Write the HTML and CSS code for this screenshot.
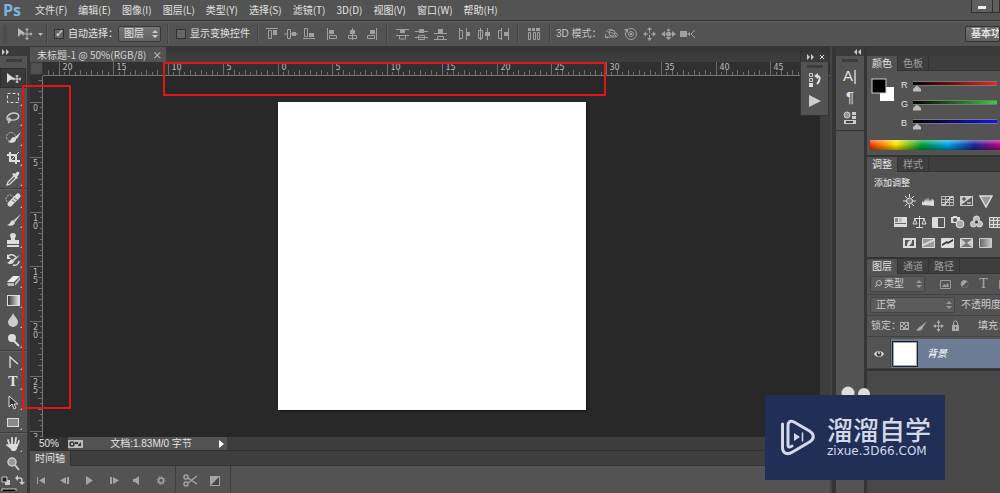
FILE: index.html
```html
<!DOCTYPE html>
<html lang="zh-CN">
<head>
<meta charset="utf-8">
<title>未标题-1</title>
<link rel="stylesheet" href="styles.css">
</head>
<body>
<header class="menubar">
  <span class="logo">Ps</span>
  <nav class="menus">
    <button>文件(F)</button><button>编辑(E)</button><button>图像(I)</button><button>图层(L)</button><button>类型(Y)</button><button>选择(S)</button><button>滤镜(T)</button><button>3D(D)</button><button>视图(V)</button><button>窗口(W)</button><button>帮助(H)</button>
  </nav>
  <div class="winctl">
    <button aria-label="最小化"><svg width="20" height="12"><path d="M6 6h8v3H6z" fill="#eee"/></svg></button>
    <button aria-label="还原"><svg width="20" height="12"><path d="M6 5h8v5H6z" fill="#eee"/></svg></button>
  </div>
</header>

<section class="options">
  <svg class="grip" width="4" height="18"><path d="M1 0v18M3 0v18" stroke="#464646"/></svg>
  <button class="current" aria-label="移动工具"><svg width="28" height="14" fill="#b9b9b9" stroke="#b9b9b9"><path d="M2 1v9l3-3 4-1z" stroke="none"/><path d="M11 3v8M7 7h8" fill="none"/><path d="M11 1l2 2h-4zM11 13l2-2h-4zM5.500 7l2-2v4zM16.500 7l-2-2v4z" stroke="none"/><path d="M22 6h5l-2.500 3z" stroke="none"/></svg></button>
  <i class="sep"></i>
  <label class="check c1"><input type="checkbox" checked>自动选择：</label>
  <span class="pick"><select aria-label="自动选择对象"><option>图层</option></select><svg width="6" height="10"><path d="M0 4l3-3 3 3zM0 6l3 3 3-3z" fill="#ccc"/></svg></span>
  <i class="sep"></i>
  <label class="check c2"><input type="checkbox">显示变换控件</label>
  <i class="sep"></i>
  <div class="icons align">
    <svg viewBox="0 0 19 14"><path d="M4 1.500h12M6.500 3.500h3v8h-3z"/><path class="f" d="M11 3h4v5h-4z"/></svg>
    <svg viewBox="0 0 19 14"><path d="M3 7h3M10 7h7M6.500 2.500h3v9h-3z"/><path class="f" d="M11 5h4v4h-4z"/></svg>
    <svg viewBox="0 0 19 14"><path d="M3 11.500h12M4.500 1.500h3v8h-3z"/><path class="f" d="M9 6h5v4H9z"/></svg>
  </div>
  <div class="icons align">
    <svg viewBox="0 0 19 14"><path d="M3.500 1v12M5.500 8.500h7v3h-7z"/><path class="f" d="M5 3h5v4H5z"/></svg>
    <svg viewBox="0 0 19 14"><path d="M9.500 1v12M5.500 8.500h8v3h-8z"/><path class="f" d="M7 3h5v4H7z"/></svg>
    <svg viewBox="0 0 19 14"><path d="M14.500 1v12M5.500 8.500h7v3h-7z"/><path class="f" d="M8 3h5v4H8z"/></svg>
  </div>
  <i class="sep s4"></i>
  <div class="icons align">
    <svg viewBox="0 0 19 14"><path d="M3 2.500h13M3 8.500h13M6.500 9v3h6V9"/><path class="f" d="M7 3h5v3H7z"/></svg>
    <svg viewBox="0 0 19 14"><path d="M3 4.500h13M3 10.500h13M6.500 8.500h6v4h-6z"/><path class="f" d="M7 2h5v4H7z"/></svg>
    <svg viewBox="0 0 19 14"><path d="M3 6.500h13M3 12.500h13M6.500 12V9.500h6V12"/><path class="f" d="M7 2h5v4H7z"/></svg>
  </div>
  <div class="icons align">
    <svg viewBox="0 0 19 14"><path d="M4.500 1v12M11.500 1v12M4.500 3.500h3v8h-3"/><path class="f" d="M12 5h3v4h-3z"/></svg>
    <svg viewBox="0 0 19 14"><path d="M6.500 1v12M13.500 1v12M4.500 3.500h4v8h-4z"/><path class="f" d="M11 5h5v4h-5z"/></svg>
    <svg viewBox="0 0 19 14"><path d="M8.500 1v12M15.500 1v12M8.500 3.500h-3v8h3"/><path class="f" d="M11 5h4v4h-4z"/></svg>
  </div>
  <i class="sep s5"></i>
  <div class="icons distribute"><svg viewBox="0 0 19 14"><path d="M4.500 5.500h2v7h-2zM9.500 5.500h2v7h-2zM13.500 5.500h2v7h-2z"/><path class="f" d="M4 1h3v3H4zM8 1h3v3H8zM12 1h4v3h-4z"/></svg></div>
  <i class="sep"></i>
  <span class="mode">3D 模式：</span>
  <div class="icons">
    <svg viewBox="0 0 19 14"><path d="M4 5c3-4 6-3 7-1M3 10h9c5 0 4-4 1-4M6 5c3 0 8 2 8 5M4 7l-1 3 3 1"/><circle cx="10" cy="6" r="3"/></svg>
    <svg viewBox="0 0 19 14"><circle cx="10" cy="7" r="5.500"/><circle cx="10" cy="7" r="2.500"/><path class="f" d="M3 2h4v4zM9 6h2v2H9z"/></svg>
    <svg viewBox="0 0 19 14"><path d="M9.500 3v3M9.500 8v3M5 7h3M11 7h3"/><path class="f" d="M9.500 0l2.500 3H7zM9.500 14l2.500-3H7zM3 7l3-2.500v5zM16 7l-3-2.500v5z"/></svg>
    <svg viewBox="0 0 19 14"><circle class="f" cx="9.500" cy="7" r="2.500"/><path d="M5 7h9"/><path class="f" d="M9.500 1l2 3h-4zM9.500 13l3-3h-6zM2 7l4-3v6zM17 7l-4-3v6z"/></svg>
    <svg viewBox="0 0 19 14"><path class="f" d="M2 4h7v6H2zM9 7l3-2v4z"/><path d="M17 3l-4 4 4 4"/></svg>
  </div>
  <button class="workspace-btn">基本功能</button>
</section>

<main class="workspace">
  <aside class="tools">
    <div class="strip"><svg width="8" height="6" fill="#ccc"><path d="M0 0l3 3-3 3zM4 0l3 3-3 3z"/></svg></div>
    <i class="handle"></i>
    <div class="toollist">
      <button class="on" aria-label="移动"><svg viewBox="0 0 18 18"><path d="M3 4v10l3-3 5-1z" fill="#ddd"/><path d="M13 6v8M9 10h8M11.500 7h3M11.500 13h3M10 8.500v3M16 8.500v3" stroke="#ddd"/></svg></button>
      <button class="more" aria-label="选框"><svg viewBox="0 0 18 18"><rect x="3.500" y="4.500" width="11" height="9" fill="none" stroke="#ddd" stroke-dasharray="3 2"/></svg></button>
      <button class="more" aria-label="套索"><svg viewBox="0 0 18 18"><path d="M5 12c-5-3 0-8 5-8s6 4 3 6-7 1-8 0 1-2 1 1-1 2-2 3" fill="none" stroke="#ccc" stroke-width="1.400"/></svg></button>
      <button class="more" aria-label="快速选择"><svg viewBox="0 0 18 18"><circle cx="7" cy="8" r="4.500" fill="none" stroke="#bbb" stroke-dasharray="2 1"/><path d="M17 3l-6 5 2 2zM10 8c-3 0-3 4-6 5 4 2 9 0 8-4z" fill="#ddd"/></svg></button>
      <button class="more" aria-label="裁剪"><svg viewBox="0 0 18 18"><path d="M6 3v9h10M3 6h9v9" fill="none" stroke="#ddd" stroke-width="2"/><path d="M15 3L7 11" stroke="#ddd"/></svg></button>
      <button class="more" aria-label="吸管"><svg viewBox="0 0 18 18"><path d="M10 7L4 13l-1 3 3-1 6-6" fill="none" stroke="#ddd" stroke-width="1.300"/><path d="M8 5l2-1 1 1 2-2c2-1 3 1 2 2l-2 3 1 1-2 1z" fill="#ddd"/></svg></button>
      <i class="rule"></i>
      <button class="more" aria-label="修复画笔"><svg viewBox="0 0 18 18"><circle cx="6" cy="8" r="4" fill="none" stroke="#bbb" stroke-dasharray="2 1"/><path d="M6 13L14 5" stroke="#ddd" stroke-width="5" stroke-linecap="round"/><path d="M8 9l4 3M10 7l3 2" stroke="#666"/></svg></button>
      <button class="more" aria-label="画笔"><svg viewBox="0 0 18 18"><path d="M17 3l-7 6 1 2zM9 9c-3 1-2 4-6 5 4 2 8 0 8-3z" fill="#ddd"/></svg></button>
      <button class="more" aria-label="图章"><svg viewBox="0 0 18 18"><path d="M9 2c4 0 3 4 2 5v2h4v4H3V9h4V7C6 6 5 2 9 2zM3 14h12v2H3z" fill="#ddd"/></svg></button>
      <button class="more" aria-label="历史画笔"><svg viewBox="0 0 18 18"><path d="M4 5c3-2 6-1 8 1M15 10c0 3-3 5-6 4" fill="none" stroke="#ddd" stroke-width="1.500"/><path d="M3 3v5h4zM16 4l-7 4 1 2zM8 8c-3 1-2 3-5 4 3 2 7 1 7-2z" fill="#ddd"/></svg></button>
      <button class="more" aria-label="橡皮擦"><svg viewBox="0 0 18 18"><path d="M3 11l6-6h7l-6 6z" fill="#eee"/><path d="M3 12h7v3H4zM11 12l5-6v3l-5 6z" fill="#bbb"/></svg></button>
      <button class="more" aria-label="渐变"><svg viewBox="0 0 18 18"><defs><linearGradient id="g1"><stop stop-color="#333"/><stop offset="1" stop-color="#eee"/></linearGradient></defs><rect x="3.500" y="4.500" width="12" height="10" fill="url(#g1)" stroke="#ddd"/></svg></button>
      <button class="more" aria-label="模糊"><svg viewBox="0 0 18 18"><path d="M9 2c2 4 5 6 5 9a5 5 0 0 1-10 0c0-3 4-5 5-9z" fill="#ccc"/></svg></button>
      <button class="more" aria-label="减淡"><svg viewBox="0 0 18 18"><circle cx="8" cy="7" r="4" fill="#ddd"/><path d="M10 10l5 5" stroke="#ddd" stroke-width="2"/></svg></button>
      <i class="rule"></i>
      <button class="more" aria-label="钢笔"><svg viewBox="0 0 18 18"><path d="M6 15V4l8 7" fill="none" stroke="#ddd" stroke-width="1.300"/></svg></button>
      <button class="more serif" aria-label="文字">T</button>
      <button class="more" aria-label="路径选择"><svg viewBox="0 0 18 18"><path d="M5 3v11l3-3 2 5 2-1-2-4h4z" fill="#333" stroke="#ddd"/></svg></button>
      <button class="more" aria-label="矩形"><svg viewBox="0 0 18 18"><rect x="3.500" y="5.500" width="11" height="8" fill="#888" stroke="#ddd"/></svg></button>
      <i class="rule"></i>
      <button class="more" aria-label="抓手"><svg viewBox="0 0 18 18"><path d="M5 10l1 1M6 11L4 5M8 10V3M11 10l1-7M13 11l2-5M6 12l-3-2" stroke="#ddd" stroke-width="1.800" stroke-linecap="round"/><path d="M5 9h9l-1 5-2 2H8l-3-4z" fill="#ddd"/></svg></button>
      <button aria-label="缩放"><svg viewBox="0 0 18 18"><circle cx="8" cy="7" r="4" fill="#999" stroke="#ccc" stroke-width="1.500"/><path d="M11 10l4 5" stroke="#ccc" stroke-width="2"/></svg></button>
    </div>
    <svg class="swap" viewBox="0 0 28 17"><path d="M5 6h5v5H5z" fill="#ccc"/><path d="M2 3h5v5H2z" fill="#222" stroke="#ccc"/><path d="M17 4h3c2 0 2 1 2 5" fill="none" stroke="#ccc" stroke-width="1.500"/><path d="M18 1v6l-3-3zM19 8h6l-3 3z" fill="#ccc"/><rect x="2" y="15" width="14" height="6" fill="#000" stroke="#ccc"/></svg>
  </aside>

  <section class="doc">
    <div class="doctabs"><div class="doctab">未标题-1 @ 50%(RGB/8)<button aria-label="关闭">×</button></div></div>
    <div class="rulerrow"><i class="corner"></i><svg id="hruler" class="hruler"></svg></div>
    <div class="stage">
      <svg id="vruler" class="vruler"></svg>
      <div class="canvas"><div class="page"></div></div>
      <i class="vscroll"></i>
    </div>
    <div class="status">
      <span class="zoomval">50%</span>
      <div class="docinfo"><svg width="15" height="8"><rect width="15" height="8" fill="#bbb"/><circle cx="4" cy="4" r="2" fill="none" stroke="#333" stroke-width="1.500"/><path d="M7 2h3v2H7zM10 5l3-3v4h-3z" fill="#333"/></svg><span>文档:1.83M/0 字节</span><svg width="5" height="8"><path d="M0 0l5 4-5 4z" fill="#fff"/></svg></div>
    </div>
    <div class="timeline">
      <div class="tabs"><button class="tab on">时间轴</button></div>
      <div class="controls">
        <div class="play">
          <svg viewBox="0 0 24 14"><path d="M7 4h1v7H7zM15 4v7L9 7.500z"/></svg>
          <svg viewBox="0 0 24 14"><path d="M12 4v7L6 7.500zM13 4h2v7h-2z"/></svg>
          <svg viewBox="0 0 24 14"><path d="M8 3v9l7-4.500z"/></svg>
          <svg viewBox="0 0 24 14"><path d="M8 4h2v7H8zM11 4v7l6-3.500z"/></svg>
          <svg viewBox="0 0 24 14"><path d="M13 3v9L9 9H7V6h2z"/></svg>
          <svg viewBox="0 0 24 14"><circle cx="11" cy="7.500" r="2.500" fill="none" stroke="#a4a4a4" stroke-width="1.500"/><circle cx="11" cy="7.500" r="4" fill="none" stroke="#a4a4a4" stroke-dasharray="1.500 1.600"/></svg>
        </div>
        <div class="cut">
          <svg viewBox="0 0 24 14"><g fill="none" stroke="#a4a4a4" stroke-width="1.500"><circle cx="7" cy="4" r="2"/><circle cx="7" cy="11" r="2"/><path d="M9 5l9 6M9 10l9-7"/></g></svg>
          <svg viewBox="0 0 24 14"><path d="M7 3h10v10H7z"/><path d="M8 12l8-8v8z" fill="#444"/></svg>
        </div>
      </div>
    </div>
    <div class="floating">
      <div class="fhead"><svg width="8" height="6" fill="#ccc"><path d="M0 0l3 3-3 3zM4 0l3 3-3 3z"/></svg><svg width="6" height="6"><path d="M1 1l4 4M5 1L1 5" stroke="#ddd"/></svg></div>
      <i class="handle"></i>
      <svg width="16" height="18"><path d="M2.500 2.500h3v3h-3zM2.500 7.500h3v3h-3z" fill="none" stroke="#ccc"/><path d="M2 12h4v4H2zM7 5l4-3v6z" fill="#ddd"/><path d="M10 5c4 0 3 5 0 8" fill="none" stroke="#ddd" stroke-width="2"/></svg>
      <svg width="14" height="16"><path d="M1 3l12 6-12 6z" fill="#ccc"/></svg>
    </div>
  </section>

  <aside class="dock">
    <div class="strip"><svg width="8" height="6" fill="#ccc"><path d="M3 0L0 3l3 3zM7 0L4 3l3 3z"/></svg></div>
    <div class="dockbody">
      <i class="handle"></i>
      <button class="char" aria-label="字符">A|</button>
      <button class="char" aria-label="段落">¶</button>
      <button aria-label="3D"><svg width="14" height="14" fill="#ccc"><circle cx="4" cy="4" r="3" fill="#999" stroke="#ccc"/><path d="M9 1h4v3H9zM9 5h4v3H9zM1 9h12v4H1z"/><path d="M3 10h7v2H3z" fill="#444"/></svg></button>
    </div>
  </aside>

  <aside class="panels">
    <div class="strip"></div>
    <section class="panel color">
      <div class="tabs"><button class="tab on">颜色</button><button class="tab">色板</button></div>
      <div class="colorbody">
        <svg class="swatch" width="26" height="26"><rect x="9" y="9" width="14" height="14" fill="#fff"/><rect x="1" y="1" width="14" height="14" fill="#000" stroke="#ccc"/></svg>
        <div class="sliders">
          <label>R<input class="r" type="range" min="0" max="255" value="0"></label>
          <label>G<input class="g" type="range" min="0" max="255" value="0"></label>
          <label>B<input class="b" type="range" min="0" max="255" value="0"></label>
        </div>
      </div>
      <div class="spectrum"></div>
    </section>
    <section class="panel adjust">
      <div class="tabs"><button class="tab on">调整</button><button class="tab">样式</button></div>
      <h2>添加调整</h2>
      <div class="adj">
        <svg viewBox="0 0 19 14"><circle cx="9.500" cy="7" r="3" fill="#777" stroke="#ddd"/><path d="M9.500 0v3M9.500 11v3M3 7h3M13 7h3M5 2l2 2M14 2l-2 2M5 12l2-2M14 12l-2-2" stroke="#ddd"/></svg>
        <svg viewBox="0 0 19 14"><path d="M3 11V8l1-1 1 2V5l1 3 1-4 1 4 1-5 1 5 1-3 1 3 1-4 1 3 1-2v7z" fill="#ddd"/></svg>
        <svg viewBox="0 0 19 14"><path d="M3.500 2.500h12v9h-12zM7.500 2v9M11.500 2v9M3 5.500h12M3 8.500h12" fill="none" stroke="#bbb"/><path d="M4 11c6 0 5-8 11-8" fill="none" stroke="#fff"/></svg>
        <svg viewBox="0 0 19 14"><path d="M3 2h13v10H3z" fill="#ccc"/><path d="M4 11L15 3v8z" fill="#555"/><path d="M5 5h4M7 3v4" stroke="#333"/><path d="M10 9h4" stroke="#eee"/></svg>
        <svg viewBox="0 0 19 14"><path d="M4 2h12l-6 11z" fill="#999" stroke="#ddd" stroke-width="1.500"/></svg>
      </div>
      <div class="adj wide">
        <svg viewBox="0 0 19 14"><path d="M3 2h13v10H3z" fill="#ddd"/><path d="M4 3h3v4H4z" fill="#888"/><path d="M8 3h3v4H8z" fill="#bbb"/><path d="M4 8h11v1H4z" fill="#666"/></svg>
        <svg viewBox="0 0 19 14"><path d="M9.500 1v11M4 3.500h11M6 12.500h7M5 4L3 9h4zM14 4l-2 5h4z" fill="none" stroke="#ddd"/></svg>
        <svg viewBox="0 0 19 14"><path d="M3.500 2.500h12v10h-12z" fill="#555" stroke="#ddd"/><path d="M4 3h5v9H4z" fill="#ddd"/></svg>
        <svg viewBox="0 0 19 14"><path d="M3 2h2V1h4v1h3v6H3z" fill="#ddd"/><circle cx="7" cy="5" r="2" fill="#555"/><circle cx="12" cy="9" r="4" fill="#aaa" stroke="#ddd"/></svg>
        <svg viewBox="0 0 19 14"><g fill="#bbb" stroke="#ddd"><circle cx="9.500" cy="4" r="3"/><circle cx="6.500" cy="9" r="3"/><circle cx="12.500" cy="9" r="3"/></g><circle cx="9.500" cy="7" r="1.500" fill="#333"/></svg>
        <svg viewBox="0 0 19 14"><path d="M3.500 2.500h12v10h-12zM7.500 2v10M11.500 2v10M3 5.500h12M3 9.500h12" fill="#777" stroke="#ddd"/></svg>
      </div>
      <div class="adj">
        <svg viewBox="0 0 19 14"><path d="M4 3h11v8H4z" fill="#555" stroke="#ddd" stroke-width="2"/><path d="M7 10c0-4 2-6 5-6 0 4-2 6-5 6" fill="#ddd"/></svg>
        <svg viewBox="0 0 19 14"><path d="M3.500 2.500h12v9h-12z" fill="#999" stroke="#ddd"/><path d="M4 8l11-5v2L4 10z" fill="#ddd"/></svg>
        <svg viewBox="0 0 19 14"><path d="M3.500 2.500h12v9h-12z" fill="#ddd" stroke="#ddd"/><path d="M4 8l5-3 1 1 5-3v2l-5 3-1-1-5 3z" fill="#333"/></svg>
        <svg viewBox="0 0 19 14"><path d="M3.500 2.500h12v9h-12z" fill="#777" stroke="#ddd"/><path d="M4 3l5 4-5 4zM15 3l-5 4 5 4z" fill="#ccc"/></svg>
        <svg viewBox="0 0 19 14"><defs><linearGradient id="g2"><stop stop-color="#666"/><stop offset="1" stop-color="#ccc"/></linearGradient></defs><path d="M3.500 2.500h12v9h-12z" fill="url(#g2)" stroke="#ccc"/></svg>
      </div>
    </section>
    <section class="panel layers">
      <div class="tabs"><button class="tab on">图层</button><button class="tab">通道</button><button class="tab">路径</button></div>
      <div class="lrow">
        <span class="pick kind"><select aria-label="类型"><option>类型</option></select><svg class="lens" width="9" height="9"><circle cx="5" cy="4" r="2.500" fill="none" stroke="#bbb"/><path d="M3 6L1 8" stroke="#bbb"/></svg><svg width="6" height="10"><path d="M0 4l3-3 3 3zM0 6l3 3 3-3z" fill="#999"/></svg></span>
        <div class="lfilters">
          <svg viewBox="0 0 19 14"><path d="M4.500 3.500h10v8h-10z" fill="none" stroke="#999"/><path d="M6 10l2-3 2 1 2-2 1 4z" fill="#999"/></svg>
          <svg viewBox="0 0 19 14"><circle cx="9.500" cy="7" r="3.500" fill="#aaa" stroke="#999"/><path d="M7 9.500l5-5a3 3 0 0 1-5 5" fill="#555"/></svg>
          <span class="serif">T</span>
          <svg viewBox="0 0 19 14"><path d="M6.500 3.500h8v8h-8z" fill="none" stroke="#999"/></svg>
        </div>
      </div>
      <div class="lrow">
        <span class="pick blend"><select aria-label="混合模式"><option>正常</option></select><svg width="6" height="10"><path d="M0 4l3-3 3 3zM0 6l3 3 3-3z" fill="#999"/></svg></span>
        <span class="opacity">不透明度：</span>
      </div>
      <div class="lrow lock">
        <span>锁定：</span>
        <div class="locks">
          <svg viewBox="0 0 17 14"><path d="M4 3h9v8H4z" fill="#aaa"/><path d="M5 4h2v2H5zM9 4h2v2H9zM7 6h2v2H7zM5 8h2v2H5zM10 7h2v2h-2z" fill="#555"/></svg>
          <svg viewBox="0 0 17 14"><path d="M14 2L8 7l2 1zM8 7c-3 1-2 3-5 4 3 2 7 0 7-3z" fill="#aaa"/></svg>
          <svg viewBox="0 0 17 14"><path d="M8.500 3v8M4 7h9" stroke="#aaa"/><path d="M8.500 1l2 3h-4zM8.500 13l2-3h-4zM3 7l3-2v4zM14 7l-3-2v4z" fill="#aaa"/></svg>
          <svg viewBox="0 0 17 14"><path d="M5 6h7v6H5z" fill="#aaa"/><path d="M6.500 6V4a2 2 0 0 1 4 0v2" fill="none" stroke="#aaa"/><path d="M8 8h1v2H8z" fill="#444"/></svg>
        </div>
        <span class="fill">填充：</span>
      </div>
      <div class="layer">
        <button class="eye" aria-label="可见"><svg width="12" height="10"><path d="M1 5c2-4 8-4 10 0-2 4-8 4-10 0z" fill="#ddd"/><circle cx="6" cy="5" r="2.500" fill="#444"/><circle cx="6" cy="4" r="1" fill="#ddd"/></svg></button>
        <div class="layerinfo"><i class="thumb"></i><em>背景</em></div>
      </div>
    </section>
  </aside>
</main>

<div class="mark mark-h"></div>
<div class="mark mark-v"></div>
<svg class="ears" width="32" height="12"><circle cx="8" cy="8" r="6.500" fill="#ddd"/><circle cx="24" cy="9" r="6" fill="#ddd"/></svg>
<div class="brand">
  <svg width="36" height="38" fill="none" stroke="#d3d9e8" stroke-width="3" stroke-linecap="round" stroke-linejoin="round"><path d="M2.500 5v23c0 7 5 8 10 5l17-10c5-3 5-8 0-11L14 3c-4-2-6 0-6 4v19c0 3 3 2 4 1"/><path d="M14 14v8l6-4z" fill="#d3d9e8" stroke="none"/><path d="M22.500 14v8" stroke-width="1.500"/></svg>
  <div class="brandtext"><strong>溜溜自学</strong><span>zixue.3D66.COM</span></div>
</div>
<script src="script.js"></script>
</body>
</html>
```
FILE: styles.css
```css
* { box-sizing: border-box; }
body {
  margin: 0; height: 100vh; overflow: hidden; position: relative;
  display: flex; flex-direction: column;
  background: #2a2a2a; color: #e2e2e2;
  font: 10px/14px "Liberation Sans", "Noto Sans CJK SC", sans-serif;
}
button, select, input { font: inherit; color: inherit; margin: 0; }
button { background: none; border: 0; padding: 0; white-space: nowrap; }
svg { display: block; flex: none; }
i { display: block; flex: none; }

.menubar { display: flex; align-items: center; height: 21px; flex: none; background: #535353; border-bottom: 1px solid #303030; }
.logo { width: 35px; padding-left: 3px; font: bold 16px/18px "Open Sans", sans-serif; color: #80b3df; }
.menus { display: flex; gap: 11px; flex: 1; font-family: "Noto Sans CJK SC", sans-serif; }
.winctl { display: flex; align-self: flex-start; width: 29px; height: 13px; overflow: hidden; border: 1px solid #303030; border-top: 0; background: #5f5f5f; }
.winctl button + button { border-left: 1px solid #303030; }

.options { display: flex; align-items: center; height: 26px; flex: none; background: #535353; border-top: 1px solid #5e5e5e; border-bottom: 1px solid #383838; overflow: hidden; white-space: nowrap; }
.grip { margin: 0 9px 0 3px; }
.current { width: 30px; }
.sep { width: 2px; height: 20px; background: #454545; border-right: 1px solid #5c5c5c; }
.check { display: flex; align-items: center; gap: 4px; }
.c1 { padding-left: 6px; width: 70px; }
.c2 { padding-left: 7px; width: 88px; }
.check input { appearance: none; width: 10px; height: 10px; border: 1px solid #333; background: #666; display: grid; place-items: center; }
.check input:checked::after { content: "✓"; font: bold 11px/8px "DejaVu Sans", sans-serif; color: #eee; }
.pick { position: relative; display: block; flex: none; width: 43px; height: 16px; margin-right: 6px; }
.pick select { appearance: none; width: 100%; height: 100%; padding: 0 5px; border: 1px solid #383838; border-radius: 2px; background: linear-gradient(#747474, #626262); }
.pick svg { position: absolute; right: 3px; top: 3px; }
.s4 { margin-right: 5px; }
.s5 { margin-right: 5px; }
.align { margin-right: 5px; }
.sep + .align { margin-left: 3px; }
.s4 + .align { margin-left: 0; }
.icons { display: flex; }
.distribute { margin-right: 6px; }
.icons svg { width: 19px; height: 14px; fill: none; stroke: #a0a0a0; }
.icons .f { fill: #a0a0a0; stroke: none; }
.mode { width: 51px; padding-left: 5px; color: #c4c4c4; }
.workspace-btn { margin-left: auto; width: 35px; height: 16px; padding-left: 5px; overflow: hidden; text-align: left; border: 1px solid #333; border-radius: 2px; background: linear-gradient(#707070, #606060); font-weight: bold; }

.workspace { display: flex; flex: 1; min-height: 0; }
.strip { height: 9px; flex: none; background: #3a3a3a; padding: 2px; }
.handle { width: 16px; height: 3px; background: #3d3d3d; margin: 3px auto; }
.tools { width: 30px; flex: none; display: flex; flex-direction: column; background: #535353; border-right: 3px solid #383838; }
.toollist { display: flex; flex-direction: column; margin-top: 3px; }
.toollist button { position: relative; height: 20px; width: 26px; flex: none; display: grid; place-items: center; }
.toollist .on { background: #3a3a3a; border: 1px solid #2e2e2e; }
.toollist svg { width: 18px; height: 18px; }
.toollist .more::after { content: ""; position: absolute; right: 4px; bottom: 2px; border: 1px solid #bbb; border-left-color: transparent; border-top-color: transparent; }
.serif { font: bold 14px/16px "Liberation Serif", serif; }
.rule { height: 2px; background: #3c3c3c; border-bottom: 1px solid #606060; }
.swap { width: 28px; height: 17px; }

.doc { position: relative; flex: 1; min-width: 0; display: flex; flex-direction: column; border-right: 2px solid #444; background: #2a2a2a; }
.doctabs { height: 15px; flex: none; display: flex; background: linear-gradient(#343434, #3f3f3f); }
.doctab { display: flex; gap: 6px; padding: 0 4px 0 7px; background: #535353; color: #d6d6d6; line-height: 16px; font-family: "Noto Sans CJK SC", sans-serif; }
.doctab button { line-height: 14px; }
.rulerrow { display: flex; height: 14px; flex: none; background: #303030; }
.corner { width: 13px; height: 13px; background: #505050; border: 1px solid #3a3a3a; }
.hruler { flex: 1; min-width: 0; height: 14px; border-bottom: 1px solid #777; }
.stage { display: flex; flex: 1; min-height: 0; }
.vruler { width: 13px; height: 100%; background: #303030; border-right: 1px solid #777; }
.hruler, .vruler { stroke: #6c6c6c; fill: #bbb; overflow: hidden; font: 8px "DejaVu Sans", sans-serif; }
.hruler text, .vruler text { stroke: none; }
.canvas { flex: 1; display: grid; place-items: center; padding-bottom: 1px; background: #282828; }
.page { width: 308px; aspect-ratio: 1; background: #fff; box-shadow: 1px 1px 2px #111; }
.vscroll { width: 10px; background: #3e3e3e; }
.status { display: flex; height: 14px; flex: none; background: #3d3d3d; border-bottom: 1px solid #303030; }
.zoomval { width: 38px; padding-left: 9px; background: #333; }
.docinfo { display: flex; align-items: center; width: 159px; background: #535353; padding: 0 3px 0 0; }
.docinfo span { flex: 1; text-align: center; }
.timeline { flex: none; background: #535353; }
.tabs { display: flex; height: 15px; background: #3e3e3e; border-bottom: 1px solid #333; }
.tab { padding: 0 5px; line-height: 15px; color: #a0a0a0; border-right: 1px solid #333; }
.tab.on { background: #535353; color: #e2e2e2; height: 15px; }
.controls { display: flex; height: 27px; }
.play, .cut { display: flex; align-items: center; border-right: 1px solid #3d3d3d; }
.play { width: 146px; }
.cut { padding: 0 3px; }
.controls svg { width: 24px; height: 14px; fill: #a4a4a4; }

.floating { position: absolute; right: 1px; top: 4px; width: 29px; height: 65px; display: flex; flex-direction: column; align-items: center; background: #535353; border: 1px solid #333; gap: 3px; }
.floating .handle { margin: 0; }
.fhead { align-self: stretch; display: flex; align-items: center; justify-content: space-between; height: 10px; flex: none; padding: 0 3px 0 6px; background: #3a3a3a; }

.dock { width: 35px; flex: none; display: flex; flex-direction: column; border: solid #353535; border-width: 0 3px 0 4px; background: #535353; }
.dock .strip { padding-left: 18px; }
.dockbody { display: flex; flex-direction: column; align-items: center; height: 75px; border-bottom: 1px solid #353535; }
.dockbody button { height: 21px; flex: none; display: grid; place-items: center; }
.dockbody .char { font: 15px/20px "Liberation Sans", sans-serif; }

.panels { width: 133px; flex: none; overflow: hidden; display: flex; flex-direction: column; background: #484848; white-space: nowrap; }
.panel { flex: none; background: #535353; border-bottom: 2px solid #333; }
.colorbody { display: flex; height: 69px; padding-top: 7px; }
.swatch { margin: 0 4px; }
.sliders { flex: 1; min-width: 0; }
.sliders label { display: grid; grid-template-columns: 12px 1fr; height: 19px; line-height: 14px; font-size: 9px; }
.sliders input { appearance: none; width: 100%; min-width: 0; padding-right: 3px; height: 14px; background: none; }
.sliders input::-webkit-slider-runnable-track { height: 5px; margin-bottom: 4px; border: 1px solid #777; border-width: 1px 0; background: linear-gradient(90deg, #000, var(--end)); }
.sliders input::-webkit-slider-thumb { appearance: none; width: 8px; height: 6px; margin-top: 4px; background: #bbb; clip-path: polygon(50% 0, 100% 60%, 100% 100%, 0 100%, 0 60%); }
.r { --end: #f02424; } .g { --end: #38d038; } .b { --end: #1212f0; }
.spectrum { height: 10px; margin: 0 0 5px 3px; background: linear-gradient(#fff6, transparent 45%, #0006), linear-gradient(90deg, #f33700, #ffe500 20%, #00a336 40%, #00a6e8 60%, #1d2a9a 80%, #c3008c); }
.adjust { padding-bottom: 4px; }
.adjust h2 { margin: 4px 0 0 7px; font-size: 9px; line-height: 14px; font-weight: normal; color: #eee; }
.adj { display: flex; padding-left: 33px; height: 21px; align-items: center; }
.adj.wide { padding-left: 24px; }
.adj svg { width: 19px; height: 14px; }
.lrow { display: flex; align-items: center; height: 21px; padding-left: 3px; border-bottom: 1px solid #424242; color: #ccc; }
.pick.kind { width: 55px; }
.kind select { padding-left: 13px; }
.pick .lens { left: 4px; right: auto; }
.pick.blend { width: 85px; }
.lrow .pick select { background: #5b5b5b; border-color: #444; }
.lfilters { display: flex; margin-left: 5px; }
.lfilters svg { width: 19px; height: 14px; }
.lfilters .serif { width: 19px; font-weight: normal; text-align: center; line-height: 14px; color: #aaa; }
.lock { padding-left: 4px; }
.lock span { width: 25px; }
.locks { display: flex; }
.locks svg { width: 17px; height: 14px; }
.lock .fill { margin-left: 14px; }
.layer { display: flex; height: 32px; padding-top: 2px; border-bottom: 1px solid #3d3d3d; }
.eye { width: 24px; display: grid; place-items: center; border-right: 1px solid #444; }
.layerinfo { flex: 1; display: flex; align-items: center; gap: 9px; padding-left: 1px; background: #6b7c94; color: #fff; }
.thumb { width: 26px; height: 26px; border: 1px solid #222; outline: 1px solid #9aa6b6; outline-offset: -2px; background: #fff; }

.mark { position: absolute; border: 2px solid #df1717; }
.mark-h { left: 163px; top: 62px; width: 443px; height: 34px; }
.mark-v { left: 22px; top: 85px; width: 49px; height: 324px; }
.ears { position: absolute; left: 840px; top: 385px; }
.brand { position: absolute; left: 765px; top: 395px; width: 180px; height: 85px; display: flex; align-items: center; gap: 11px; padding-left: 15px; background: #212f56; color: #d3d9e8; }
.brandtext { display: flex; flex-direction: column; padding-bottom: 5px; }
.brandtext strong { font: 500 26px/32px "Noto Sans CJK SC", sans-serif; }
.brandtext span { font: 12px/12px "DejaVu Sans", sans-serif; }
```
FILE: script.js
```js
// Ruler marks: one labelled line every five units, a short mark every half unit.
const NS = "http://www.w3.org/2000/svg";
const FIVE = 54.75;

function add(parent, name, attrs, text) {
  const node = document.createElementNS(NS, name);
  for (const key in attrs) node.setAttribute(key, attrs[key]);
  if (text !== undefined) node.textContent = text;
  parent.appendChild(node);
}

function ruler(svg, origin, length, vertical) {
  const step = FIVE / 10;
  for (let i = -Math.floor(origin / step); origin + i * step < length; i++) {
    const pos = Math.round(origin + i * step) + 0.5;
    const major = i % 10 === 0;
    const start = major ? 0 : i % 2 === 0 ? 8 : 10;
    add(svg, "path", { d: vertical ? `M${start} ${pos}H13` : `M${pos} ${start}V14` });
    if (!major) continue;
    const label = String(Math.abs(i / 2));
    if (vertical) {
      // Digits are stacked; one that would fall below the ruler is left out.
      [...label].forEach((c, n) => {
        if (pos + n * 8 < length) add(svg, "text", { x: 3, y: pos + 8 + n * 8 }, c);
      });
    } else if (pos + 14 < length) {
      add(svg, "text", { x: pos + 3, y: 8 }, label);
    }
  }
}

const page = document.querySelector(".page").getBoundingClientRect();
const h = document.getElementById("hruler");
const v = document.getElementById("vruler");
const hb = h.getBoundingClientRect();
const vb = v.getBoundingClientRect();
ruler(h, page.left - hb.left, hb.width, false);
ruler(v, page.top - vb.top, vb.height, true);
```
